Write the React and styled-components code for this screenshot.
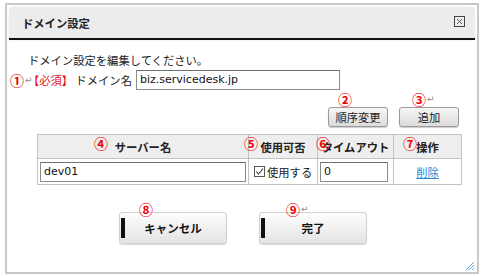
import React from "react";
import styled, { createGlobalStyle } from "styled-components";

const Global = createGlobalStyle`
  html, body { margin: 0; padding: 0; background: #fff; }
  body {
    font-family: "DejaVu Sans", "Noto Sans CJK JP", sans-serif;
    font-size: 11.3px;
    color: #222;
  }
`;

const Dialog = styled.div`
  position: relative;
  box-sizing: border-box;
  width: 474px;
  height: 271px;
  margin: 3px 0 0 5px;
  border: 2px solid #c8c8c8;
  padding: 2px;
  display: flex;
  flex-direction: column;
`;

const TitleBar = styled.div`
  box-sizing: border-box;
  height: 33px;
  background: #ececec;
  border-radius: 5px 5px 0 0;
  border-bottom: 2px solid #111;
  box-shadow: 0 0 1px #bbb;
  display: flex;
  align-items: center;
  justify-content: space-between;
  padding: 0 10px 0 13px;
`;

const Title = styled.div`
  font-weight: bold;
  font-family: "Noto Sans CJK JP", sans-serif;
  font-size: 11.3px;
  color: #222;
`;

const CloseBox = styled.svg`
  width: 11px;
  height: 11px;
  margin-bottom: 2px;
  display: block;
`;

const Body = styled.div`
  display: flex;
  flex-direction: column;
  padding: 0 16px 0 1px;
`;

const Intro = styled.div`
  margin-top: 12px;
  padding-left: 18px;
  height: 16px;
  line-height: 16px;
  font-family: "Noto Sans CJK JP", sans-serif;
`;

const DomainRow = styled.div`
  margin-top: 1px;
  height: 21px;
  display: flex;
  align-items: center;
  font-family: "Noto Sans CJK JP", sans-serif;
`;

const Mark = styled.span`
  font-family: "Noto Sans CJK JP", sans-serif;
  font-size: 14px;
  font-weight: bold;
  line-height: 14px;
  color: #f00000;
  white-space: nowrap;
`;

const Badge = styled(Mark)`
  position: absolute;
  left: ${(p) => p.$left}px;
  top: ${(p) => p.$top}px;
`;

const Ret = styled.span`
  font-family: "DejaVu Sans", sans-serif;
  font-size: 9px;
  font-weight: normal;
  color: #888;
  margin-left: 1px;
  vertical-align: 3px;
`;

const Required = styled.span`
  color: #e8101a;
  margin-left: 1px;
  font-feature-settings: "halt";
`;

const Label = styled.span`
  margin-left: 8px;
  margin-right: 4px;
`;

const TextInput = styled.div`
  box-sizing: border-box;
  width: ${(p) => p.$w}px;
  height: 20px;
  border: 1px solid #8a8a8a;
  border-top-color: #707070;
  background: #fff;
  font-family: "DejaVu Sans", sans-serif;
  font-size: 11px;
  line-height: 18px;
  padding-left: 3px;
  color: #111;
`;

const ActionRow = styled.div`
  margin-top: 17px;
  display: flex;
  justify-content: flex-end;
  gap: 11px;
`;

const SmallButton = styled.div`
  position: relative;
  box-sizing: border-box;
  width: 60px;
  height: 20px;
  border: 1px solid #9a9a9a;
  border-radius: 3px;
  background: linear-gradient(#f6f6f6, #dcdcdc);
  box-shadow: 0 1px 1px rgba(0, 0, 0, 0.2);
  display: flex;
  align-items: center;
  justify-content: center;
  font-family: "Noto Sans CJK JP", sans-serif;
  font-size: 11.3px;
  color: #222;
`;

const Table = styled.table`
  margin: 7px 0 0 27px;
  width: 424px;
  border-collapse: collapse;
  table-layout: fixed;
  font-family: "Noto Sans CJK JP", sans-serif;
`;

const Th = styled.th`
  position: relative;
  height: 23px;
  padding: 0;
  background: #eeeeee;
  border: 1px solid #c2c2c2;
  font-weight: bold;
  font-size: 11.3px;
  text-align: center;
  color: #222;
`;

const Td = styled.td`
  height: 25px;
  padding: 0 2px;
  border: 1px solid #c2c2c2;
  text-align: ${(p) => p.$align || "left"};
  vertical-align: middle;
`;

const CheckWrap = styled.label`
  display: flex;
  align-items: center;
  gap: 2px;
  padding-left: 3px;
  font-size: 11.3px;
`;

const CheckIcon = styled.svg`
  width: 11px;
  height: 11px;
  display: block;
`;

const LinkText = styled.span`
  color: #2a8bd6;
  text-decoration: underline;
`;

const Footer = styled.div`
  margin-top: 27px;
  display: flex;
  justify-content: center;
  gap: 32px;
  padding-left: 17px;
`;

const BigButton = styled.div`
  position: relative;
  box-sizing: border-box;
  width: 108px;
  height: 32px;
  border: 1px solid #d2d2d2;
  border-radius: 3px;
  background: linear-gradient(#fdfdfd, #e4e4e4);
  box-shadow: 0 1px 1px rgba(0, 0, 0, 0.15);
  display: flex;
  align-items: center;
  justify-content: center;
  font-family: "Noto Sans CJK JP", sans-serif;
  font-weight: bold;
  font-size: 11.5px;
  color: #111;

  &::before {
    content: "";
    position: absolute;
    left: 1px;
    top: 5px;
    width: 4px;
    height: 20px;
    background: #111;
  }
`;

const Grip = styled.svg`
  position: absolute;
  right: 2px;
  bottom: 1px;
  width: 10px;
  height: 10px;
`;

export default function App() {
  return (
    <>
      <Global />
      <Dialog>
        <TitleBar>
          <Title>ドメイン設定</Title>
          <CloseBox viewBox="0 0 11 11">
            <rect x="0.5" y="0.5" width="10" height="10" fill="#eeeeee" stroke="#444" />
            <path d="M3 3 L8 8 M8 3 L3 8" stroke="#555" strokeWidth="1" />
          </CloseBox>
        </TitleBar>
        <Body>
          <Intro>ドメイン設定を編集してください。</Intro>
          <DomainRow>
            <Mark>①</Mark>
            <Ret>↵</Ret>
            <Required>【必須】</Required>
            <Label>ドメイン名</Label>
            <TextInput $w={204}>biz.servicedesk.jp</TextInput>
          </DomainRow>
          <ActionRow>
            <SmallButton>
              <Badge $left={9} $top={-16}>②</Badge>
              順序変更
            </SmallButton>
            <SmallButton>
              <Badge $left={12} $top={-16}>
                ③<Ret>↵</Ret>
              </Badge>
              追加
            </SmallButton>
          </ActionRow>
          <Table>
            <colgroup>
              <col style={{ width: 211 }} />
              <col style={{ width: 69 }} />
              <col style={{ width: 76 }} />
              <col style={{ width: 68 }} />
            </colgroup>
            <thead>
              <tr>
                <Th>
                  <Badge $left={56} $top={1}>④</Badge>
                  サーバー名
                </Th>
                <Th>
                  <Badge $left={-5} $top={1}>⑤</Badge>
                  使用可否
                </Th>
                <Th>
                  <Badge $left={-2} $top={1}>⑥</Badge>
                  タイムアウト
                </Th>
                <Th>
                  <Badge $left={9} $top={1}>⑦</Badge>
                  操作
                </Th>
              </tr>
            </thead>
            <tbody>
              <tr>
                <Td>
                  <TextInput $w={206}>dev01</TextInput>
                </Td>
                <Td>
                  <CheckWrap>
                    <CheckIcon viewBox="0 0 11 11">
                      <rect x="0.5" y="0.5" width="10" height="10" fill="#fff" stroke="#555" />
                      <path d="M2.3 5.6 L4.6 8 L9 2.6" fill="none" stroke="#444" strokeWidth="1.1" />
                    </CheckIcon>
                    使用する
                  </CheckWrap>
                </Td>
                <Td>
                  <TextInput $w={68}>0</TextInput>
                </Td>
                <Td $align="center">
                  <LinkText>削除</LinkText>
                </Td>
              </tr>
            </tbody>
          </Table>
          <Footer>
            <BigButton>
              <Badge $left={19} $top={-11}>⑧</Badge>
              キャンセル
            </BigButton>
            <BigButton>
              <Badge $left={26} $top={-11}>
                ⑨<Ret>↵</Ret>
              </Badge>
              完了
            </BigButton>
          </Footer>
        </Body>
        <Grip viewBox="0 0 10 10">
          <path d="M9 1 L1 9 M9 4 L4 9 M9 7 L7 9" stroke="#5aa8e6" strokeWidth="1" />
        </Grip>
      </Dialog>
    </>
  );
}
